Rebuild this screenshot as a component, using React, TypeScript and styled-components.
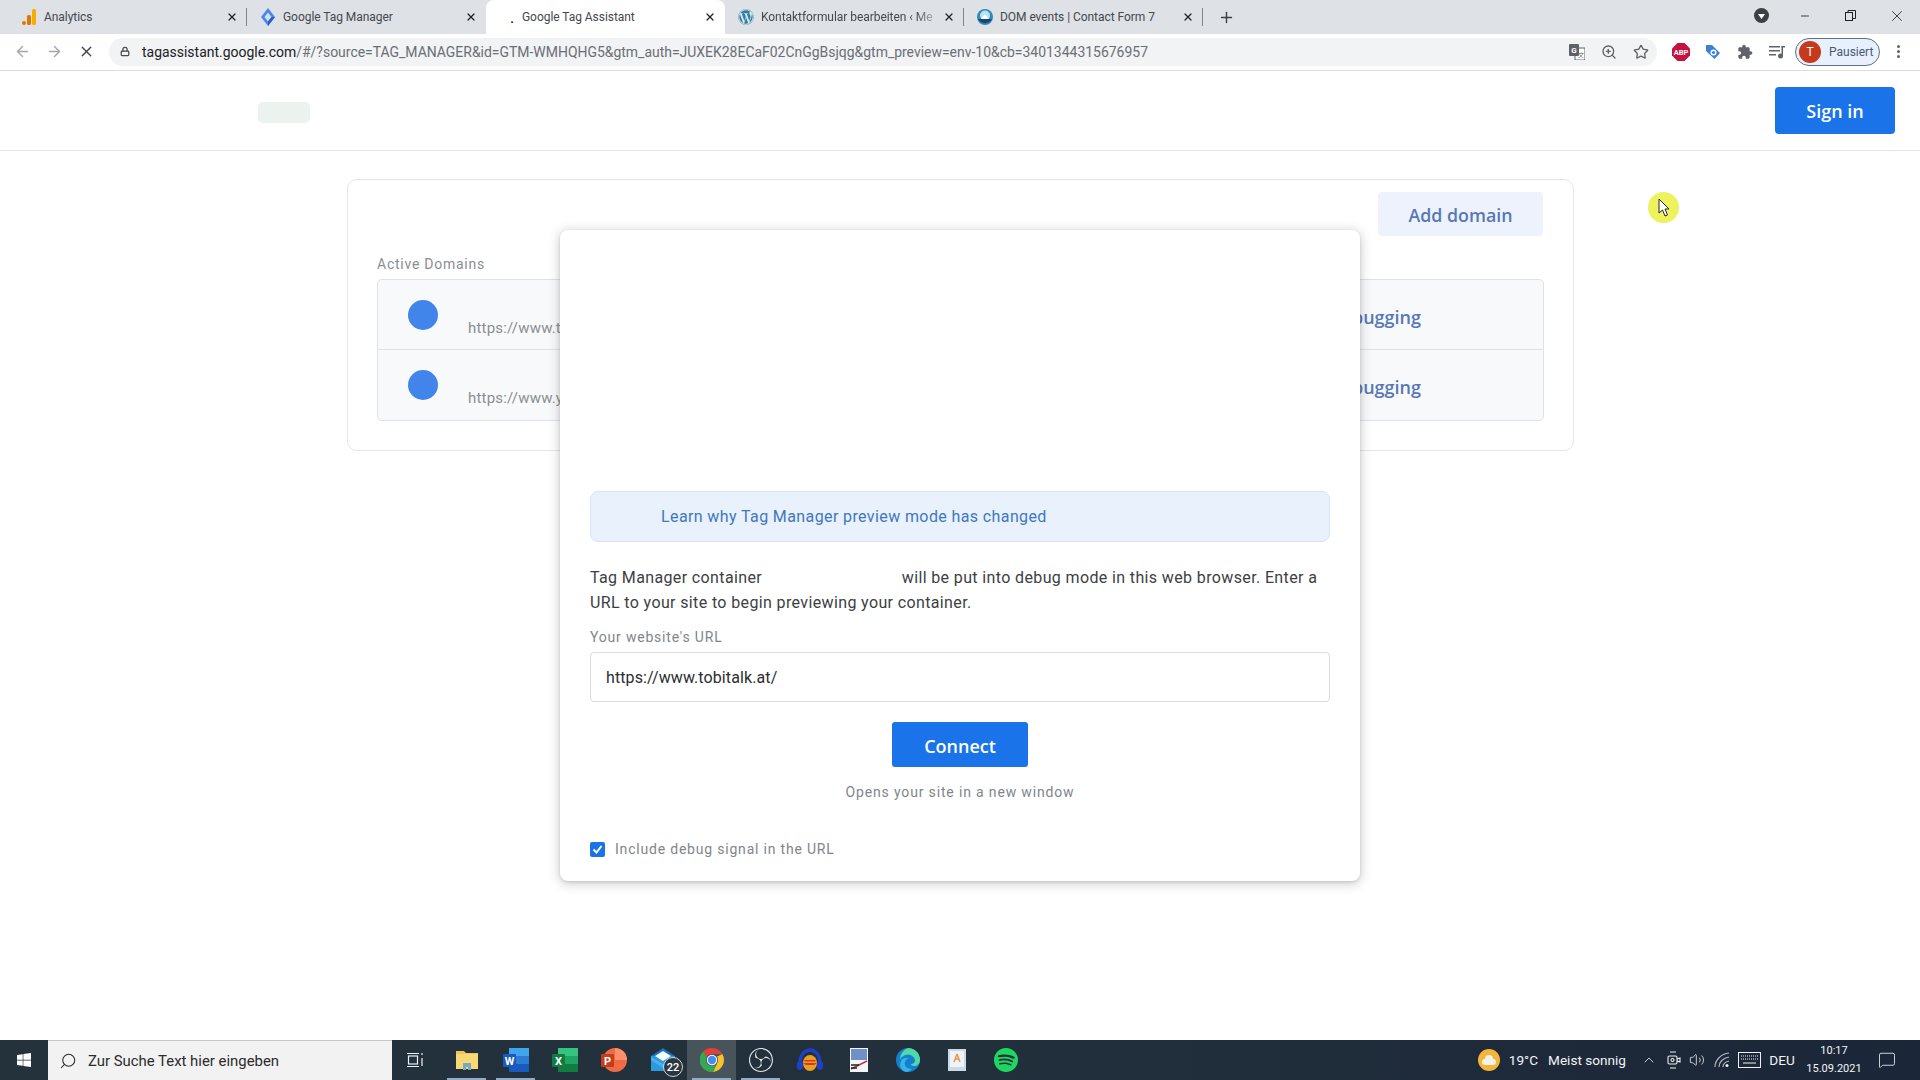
import React from "react";
import styled, { createGlobalStyle } from "styled-components";
import { ArrowLeft, ArrowRight, X, Lock, ZoomIn, Star, Plus, Minus, Search, ChevronUp, Volume2, MessageSquare } from "lucide-react";
import { FaWindows, FaWordpress } from "react-icons/fa";
import { SiObsstudio, SiSpotify } from "react-icons/si";

const Global = createGlobalStyle`
  html, body { margin: 0; padding: 0; background: #fff; }
  * { box-sizing: border-box; }
  body { font-family: Roboto, "Liberation Sans", sans-serif; }
`;

const Root = styled.div`
  position: relative;
  width: 1920px;
  height: 1080px;
  display: flex;
  flex-direction: column;
  overflow: hidden;
  background: #fff;
`;

/* ---------- browser chrome ---------- */
const TabStrip = styled.div`
  height: 34px;
  flex: none;
  display: flex;
  align-items: stretch;
  padding-left: 8px;
  background: #dee1e6;
`;
const Tab = styled.div<{ $active?: boolean; $sep?: boolean }>`
  position: relative;
  width: 239px;
  flex: none;
  display: flex;
  align-items: center;
  padding: 0 8px 0 13px;
  border-radius: 8px 8px 0 0;
  background: ${(p) => (p.$active ? "#fff" : "transparent")};
  &::after {
    content: "";
    display: ${(p) => (p.$sep ? "block" : "none")};
    position: absolute;
    right: 0;
    top: 8px;
    bottom: 8px;
    width: 1px;
    background: #80868b;
  }
`;
const Favicon = styled.span`
  width: 16px;
  height: 16px;
  flex: none;
  margin-right: 7px;
  display: flex;
  align-items: center;
  justify-content: center;
`;
const LoadingDot = styled.span`
  margin-left: 10px;
`;
const TabTitle = styled.span<{ $fade?: boolean }>`
  flex: 1;
  min-width: 0;
  overflow: hidden;
  white-space: nowrap;
  font-size: 12px;
  letter-spacing: -0.05px;
  color: #45484d;
  ${(p) => (p.$fade ? "-webkit-mask-image: linear-gradient(90deg,#000 85%,transparent 100%);" : "")}
`;
const TabClose = styled.span`
  width: 14px;
  flex: none;
  display: flex;
  justify-content: center;
  color: #202124;
`;
const NewTab = styled.span`
  width: 20px;
  margin-left: 13px;
  display: flex;
  align-items: center;
  justify-content: center;
  color: #3c4043;
`;
const WindowControls = styled.div`
  margin-left: auto;
  display: flex;
  align-items: center;
  color: #3c4043;
  padding: 0 1px 3px 0;
`;
const WinSlot = styled.span<{ $w: number }>`
  width: ${(p) => p.$w}px;
  display: flex;
  justify-content: center;
  align-items: center;
`;

const Toolbar = styled.div`
  height: 37px;
  flex: none;
  display: flex;
  align-items: center;
  padding: 0 0 1px 6px;
  background: #fff;
  border-bottom: 1px solid #dadce0;
`;
const ToolSlot = styled.span<{ $w?: number; $color?: string }>`
  width: ${(p) => p.$w ?? 32}px;
  flex: none;
  display: flex;
  align-items: center;
  justify-content: center;
  color: ${(p) => p.$color ?? "#5f6368"};
`;
const UrlBar = styled.div`
  width: 1548px;
  height: 28px;
  flex: none;
  margin: 0 8px 0 7px;
  padding: 0 0 0 11px;
  display: flex;
  align-items: center;
  border-radius: 14px;
  background: #f1f3f4;
`;
const UrlText = styled.div`
  flex: 1;
  min-width: 0;
  margin-left: 12px;
  overflow: hidden;
  white-space: nowrap;
  font-size: 13.96px;
  color: #6b6f74;
  b { font-weight: 400; color: #202124; }
`;
const ProfilePill = styled.div`
  width: 85px;
  height: 28px;
  flex: none;
  margin-left: 2px;
  display: flex;
  align-items: center;
  gap: 8px;
  padding-left: 3px;
  border: 1px solid #5f6f85;
  border-radius: 14px;
  background: #e8f0fe;
  font-size: 12px;
  color: #4a5a70;
`;
const Avatar = styled.span`
  width: 22px;
  height: 22px;
  border-radius: 50%;
  background: #c5391c;
  color: #fff;
  display: flex;
  align-items: center;
  justify-content: center;
  font-size: 12px;
`;
const MenuDots = styled.span`
  margin-left: 2px;
  width: 32px;
  display: flex;
  flex-direction: column;
  align-items: center;
  gap: 2px;
  i { width: 3px; height: 3px; border-radius: 50%; background: #5f6368; display: block; }
`;

/* ---------- page ---------- */
const Header = styled.header`
  height: 80px;
  flex: none;
  display: flex;
  align-items: center;
  justify-content: space-between;
  padding: 0 25px 0 258px;
  border-bottom: 1px solid #e3e5e8;
`;
const LogoBlob = styled.div`
  width: 52px;
  height: 21px;
  margin-top: 3px;
  border-radius: 5px;
  background: #ecf3ee;
`;
const SignIn = styled.button`
  width: 120px;
  height: 47px;
  border: 0;
  border-radius: 4px;
  background: #1a73e8;
  color: #fff;
  font-family: "Open Sans", sans-serif;
  font-size: 18px;
  font-weight: 600;
`;
const Main = styled.main`
  position: relative;
  flex: 1;
  min-height: 0;
  padding: 28px 0 0 347px;
`;
const DomainCard = styled.section`
  width: 1227px;
  height: 272px;
  padding: 12px 29px 0 29px;
  border: 1px solid #e4e6e9;
  border-radius: 10px;
`;
const CardTop = styled.div`
  display: flex;
  justify-content: flex-end;
  padding-right: 1px;
`;
const AddDomain = styled.button`
  width: 165px;
  height: 44px;
  padding: 2px 0 0;
  border: 0;
  border-radius: 4px;
  background: #edf2fc;
  color: #5877b5;
  font-family: "Open Sans", sans-serif;
  font-size: 17.8px;
  font-weight: 600;
`;
const SectionLabel = styled.div`
  margin-top: 18px;
  height: 20px;
  line-height: 20px;
  font-size: 14px;
  letter-spacing: 0.75px;
  color: #8a8e93;
`;
const DomainList = styled.div`
  margin-top: 5px;
  height: 142px;
  border: 1px solid #dfe1e4;
  border-radius: 5px;
  background: #f8f9fa;
`;
const DomainRow = styled.div<{ $last?: boolean }>`
  height: 70px;
  display: flex;
  align-items: flex-start;
  padding: 0 99px 0 30px;
  border-bottom: ${(p) => (p.$last ? "0" : "1px solid #e0e2e5")};
`;
const Dot = styled.span`
  width: 30px;
  height: 30px;
  margin-top: 20px;
  border-radius: 50%;
  background: #4285ea;
`;
const RowUrl = styled.span`
  margin: 38px 0 0 30px;
  line-height: 20px;
  font-size: 15px;
  letter-spacing: 0.2px;
  color: #8a8e93;
`;
const RowAction = styled.span`
  margin: 26px 23px 0 auto;
  line-height: 22px;
  font-family: "Open Sans", sans-serif;
  font-size: 18px;
  font-weight: 600;
  color: #5877b5;
`;
const Modal = styled.div`
  position: absolute;
  left: 560px;
  top: 79px;
  width: 800px;
  height: 651px;
  padding: 261px 30px 0;
  border-radius: 8px;
  background: #fff;
  box-shadow: 0 2px 12px rgba(60, 64, 67, 0.3), 0 1px 3px rgba(60, 64, 67, 0.15);
`;
const Banner = styled.div`
  height: 51px;
  display: flex;
  align-items: center;
  padding-left: 70px;
  border: 1px solid #d8e4f6;
  border-radius: 8px;
  background: #e9f1fd;
  font-size: 16px;
  letter-spacing: 0.39px;
  color: #3f78bd;
`;
const Paragraph = styled.p`
  margin: 23px 0 0;
  font-size: 16px;
  line-height: 25px;
  letter-spacing: 0.37px;
  color: #3c4043;
`;
const ParagraphLine = styled.span`
  display: block;
  white-space: nowrap;
`;
const Redacted = styled.span`
  display: inline-block;
  width: 131px;
`;
const FieldLabel = styled.div`
  margin-top: 12px;
  line-height: 20px;
  font-size: 14px;
  letter-spacing: 0.8px;
  color: #80868b;
`;
const UrlInput = styled.div`
  margin-top: 5px;
  height: 50px;
  display: flex;
  align-items: center;
  padding: 0 15px;
  border: 1px solid #dadce0;
  border-radius: 4px;
  font-size: 16px;
  letter-spacing: 0.1px;
  color: #2b2e31;
`;
const ConnectRow = styled.div`
  margin-top: 20px;
  display: flex;
  justify-content: center;
`;
const Connect = styled.button`
  width: 136px;
  height: 45px;
  padding: 2px 0 0;
  border: 0;
  border-radius: 3px;
  background: #1a73e8;
  color: #fff;
  font-family: "Open Sans", sans-serif;
  font-size: 18px;
  font-weight: 600;
`;
const Hint = styled.div`
  margin-top: 15px;
  text-align: center;
  line-height: 20px;
  font-size: 14px;
  letter-spacing: 0.84px;
  color: #80868b;
`;
const CheckRow = styled.div`
  margin-top: 37px;
  display: flex;
  align-items: center;
  gap: 10px;
  line-height: 20px;
  font-size: 14px;
  letter-spacing: 0.8px;
  color: #80868b;
`;
const CheckBox = styled.span`
  width: 15px;
  height: 15px;
  display: flex;
  align-items: center;
  justify-content: center;
  border-radius: 2px;
  background: #1a73e8;
`;

/* ---------- taskbar ---------- */
const Taskbar = styled.footer`
  height: 40px;
  flex: none;
  display: flex;
  align-items: stretch;
  background: linear-gradient(90deg, #24323c 0%, #22303c 50%, #1b2638 100%);
  color: #fff;
`;
const StartButton = styled.span`
  width: 48px;
  display: flex;
  align-items: center;
  justify-content: center;
`;
const SearchBox = styled.div`
  width: 344px;
  display: flex;
  align-items: center;
  gap: 11px;
  padding-left: 11px;
  background: #f2f2f2;
  border-top: 1px solid #c8c8c8;
  color: #2b2b2b;
  font-size: 14.9px;
`;
const SearchGlyph = styled(Search)`
  transform: scaleX(-1);
`;
const TaskView = styled.span`
  width: 50px;
  padding-right: 2px;
  display: flex;
  align-items: center;
  justify-content: center;
`;
const AppSlot = styled.span<{ $active?: boolean; $open?: boolean }>`
  position: relative;
  width: 49px;
  display: flex;
  align-items: center;
  justify-content: center;
  background: ${(p) => (p.$active ? "#47545c" : "transparent")};
  &::after {
    content: "";
    display: ${(p) => (p.$open ? "block" : "none")};
    position: absolute;
    left: 5px;
    right: 5px;
    bottom: 0;
    height: 2px;
    background: #93aec4;
  }
`;
const Badge = styled.span`
  position: absolute;
  right: 4px;
  bottom: 3px;
  width: 20px;
  height: 20px;
  display: flex;
  align-items: center;
  justify-content: center;
  border: 1px solid #d0d4d8;
  border-radius: 50%;
  background: #2a3640;
  font-size: 11px;
  font-weight: 500;
`;
const Tray = styled.div`
  margin-left: auto;
  display: flex;
  align-items: center;
  font-size: 13.6px;
  color: #f2f4f6;
`;
const TraySlot = styled.span<{ $w: number }>`
  width: ${(p) => p.$w}px;
  flex: none;
  display: flex;
  align-items: center;
  justify-content: center;
`;
const WeatherText = styled.span<{ $gap: number }>`
  margin-left: ${(p) => p.$gap}px;
  white-space: nowrap;
`;
const Clock = styled.span`
  width: 64px;
  display: flex;
  flex-direction: column;
  align-items: center;
  gap: 4px;
  font-size: 11px;
  line-height: 14px;
`;

/* ---------- cursor highlight ---------- */
const CursorHalo = styled.div`
  position: absolute;
  left: 1648px;
  top: 192px;
  width: 31px;
  height: 31px;
  display: flex;
  align-items: center;
  justify-content: center;
  border-radius: 50%;
  background: #eef25c;
`;

/* ---------- drawings ---------- */
const AnalyticsIcon = () => (
  <svg width="16" height="16" viewBox="0 0 16 16">
    <rect x="11" y="0" width="4" height="16" rx="1.5" fill="#f9ab00" />
    <rect x="6" y="6" width="4" height="10" rx="1.5" fill="#e37400" />
    <circle cx="3" cy="14" r="2" fill="#e37400" />
  </svg>
);
const GtmIcon = () => (
  <svg width="16" height="18" viewBox="0 0 16 18">
    <path d="M8 0l7 9-7 9-7-9z" fill="#4c86ea" />
    <path d="M8 4.5L11.5 9 8 13.5 4.5 9z" fill="#fff" opacity=".75" />
    <path d="M8 13.5l3.5-4.5L15 9l-7 9z" fill="#2a5fc4" />
  </svg>
);
const ContactIcon = () => (
  <svg width="16" height="16" viewBox="0 0 16 16">
    <circle cx="8" cy="8" r="8" fill="#2f88b8" />
    <circle cx="8" cy="6.5" r="5" fill="#b8e2ef" />
    <path d="M4 10l4-5 4 5z" fill="#fff" />
    <path d="M1 10h14a8 8 0 0 1-14 0z" fill="#1d4470" />
  </svg>
);
const TranslateIcon = () => (
  <svg width="16" height="16" viewBox="0 0 16 16">
    <rect x="6" y="4" width="10" height="12" fill="#fff" stroke="#5f6368" />
    <rect x="0" y="0" width="10" height="12" rx="1" fill="#5f6368" />
    <text x="5" y="9" textAnchor="middle" fontSize="8" fontWeight="700" fill="#fff" fontFamily="Roboto">G</text>
    <text x="12" y="13" textAnchor="middle" fontSize="6" fill="#5f6368" fontFamily="Noto Sans CJK SC">文</text>
  </svg>
);
const AbpIcon = () => (
  <svg width="18" height="18" viewBox="0 0 18 18">
    <path d="M5.5 0h7L18 5.5v7L12.500 18h-7L0 12.500v-7z" fill="#c7123f" />
    <text x="9" y="12" textAnchor="middle" fontSize="7.5" fontWeight="700" fill="#fff" fontFamily="Roboto">ABP</text>
  </svg>
);
const TagIcon = () => (
  <svg width="16" height="16" viewBox="0 0 16 16">
    <path d="M1 1h6l8 8-5.500 6L1 7z" fill="#3b82d6" />
    <circle cx="8.500" cy="8.500" r="3" fill="#fff" />
    <circle cx="8.500" cy="8.500" r="1.600" fill="#3b82d6" />
  </svg>
);
const PuzzleIcon = () => (
  <svg width="16" height="16" viewBox="0 0 24 24" fill="#5f6368">
    <path d="M20.500 11H19V7c0-1.100-.9-2-2-2h-4V3.500C13 2.120 11.880 1 10.500 1S8 2.120 8 3.500V5H4c-1.100 0-1.990.9-1.990 2v3.800H3.500c1.490 0 2.700 1.210 2.700 2.700s-1.210 2.700-2.700 2.700H2V20c0 1.100.9 2 2 2h3.800v-1.500c0-1.490 1.210-2.700 2.700-2.700 1.490 0 2.700 1.210 2.700 2.700V22H17c1.100 0 2-.9 2-2v-4h1.500c1.380 0 2.500-1.120 2.500-2.500S21.880 11 20.500 11z" />
  </svg>
);
const MediaIcon = () => (
  <svg width="16" height="14" viewBox="0 0 16 14" fill="#5f6368">
    <rect x="0" y="1" width="11" height="1.500" />
    <rect x="0" y="5" width="11" height="1.500" />
    <rect x="0" y="9" width="7" height="1.500" />
    <rect x="12.500" y="1" width="1.500" height="10" />
    <rect x="12.500" y="1" width="3.500" height="1.500" />
    <circle cx="11.500" cy="11" r="2.500" />
  </svg>
);
const DownloadDisc = () => (
  <svg width="15" height="15" viewBox="0 0 15 15">
    <circle cx="7.500" cy="7.500" r="7.500" fill="#3c4043" />
    <path d="M4 6h7l-3.500 5z" fill="#fff" />
  </svg>
);
const RestoreIcon = () => (
  <svg width="11" height="11" viewBox="0 0 11 11" fill="none" stroke="#202124" strokeWidth="1">
    <rect x=".5" y="2.500" width="7" height="8" />
    <path d="M3 2.500V.5h7.500v8H7.500" />
  </svg>
);
const TaskViewIcon = () => (
  <svg width="18" height="16" viewBox="0 0 18 16" fill="none" stroke="#eef1f3" strokeWidth="1.200">
    <path d="M0 1.500h12M0 14.500h12" />
    <rect x="1.500" y="4" width="9" height="8" />
    <path d="M15 1v2M15 6v8" />
  </svg>
);
const ExplorerIcon = () => (
  <svg width="24" height="24" viewBox="0 0 24 24">
    <path d="M1 3h8l2 2h12v16H1z" fill="#f3c558" />
    <rect x="1" y="6" width="22" height="15" fill="#f8d775" />
    <path d="M8 22v-7h8v7h-3v-3h-2v3z" fill="#7aa7c7" />
  </svg>
);
const OfficeIcon = ({ back, mid, front, letter }: { back: string; mid: string; front: string; letter: string }) => (
  <svg width="26" height="24" viewBox="0 0 26 24">
    <rect x="6" y="0" width="20" height="8" fill={back} />
    <rect x="6" y="8" width="20" height="8" fill={mid} />
    <rect x="6" y="16" width="20" height="8" fill={front} />
    <rect x="0" y="6" width="13" height="13" rx="1" fill={front} />
    <text x="6.500" y="16.500" textAnchor="middle" fontSize="11" fontWeight="700" fill="#fff" fontFamily="Roboto">{letter}</text>
  </svg>
);
const PptIcon = () => (
  <svg width="26" height="24" viewBox="0 0 26 24">
    <circle cx="14" cy="12" r="12" fill="#ed6c47" />
    <path d="M14 0a12 12 0 0 1 12 12H14z" fill="#ff8f6b" />
    <rect x="0" y="6" width="13" height="13" rx="1" fill="#c43e1c" />
    <text x="6.500" y="16.500" textAnchor="middle" fontSize="11" fontWeight="700" fill="#fff" fontFamily="Roboto">P</text>
  </svg>
);
const MailIcon = () => (
  <svg width="26" height="24" viewBox="0 0 26 24">
    <rect x="1" y="8" width="24" height="15" fill="#2b9be0" />
    <path d="M1 8l12-8 12 8z" fill="#1d6fb8" />
    <path d="M5 8l8-5 8 5-8 5z" fill="#f5fafd" />
    <path d="M1 9l12 7 12-7v3l-12 8-12-8z" fill="#49b2ee" />
  </svg>
);
const ChromeIcon = () => (
  <svg width="24" height="24" viewBox="0 0 24 24">
    <path d="M12 0a12 12 0 0 1 10.400 6H12a6 6 0 0 0-5.200 3L3 3.600A12 12 0 0 1 12 0z" fill="#e0413a" />
    <path d="M22.400 6A12 12 0 0 1 13 23.950L17.200 15A6 6 0 0 0 18 12a6 6 0 0 0-1-3.400z" fill="#f3c22d" />
    <path d="M13 23.950A12 12 0 0 1 3 3.600L6.800 9a6 6 0 0 0 5.200 9 6 6 0 0 0 5.200-3z" fill="#36a853" />
    <circle cx="12" cy="12" r="5.200" fill="#fff" />
    <circle cx="12" cy="12" r="4.200" fill="#4a8af4" />
  </svg>
);
const AudacityIcon = () => (
  <svg width="26" height="24" viewBox="0 0 26 24">
    <path d="M3 16C3 6 8 2 13 2s10 4 10 14" fill="none" stroke="#1f3fc4" strokeWidth="3.500" />
    <rect x="0" y="13" width="6" height="9" rx="3" fill="#1f3fc4" />
    <rect x="20" y="13" width="6" height="9" rx="3" fill="#1f3fc4" />
    <ellipse cx="13" cy="15" rx="7" ry="8" fill="#e8a020" />
    <path d="M6 15h14l-3 2H9z" fill="#d8361e" />
    <path d="M7 12h12l-1 1.500H8z" fill="#d8361e" />
  </svg>
);
const PaperIcon = () => (
  <svg width="18" height="24" viewBox="0 0 18 24">
    <rect width="18" height="24" fill="#f4f6f8" />
    <rect x="1" y="1" width="16" height="11" fill="#6f91c8" />
    <path d="M1 21L17 13" stroke="#b33a4a" strokeWidth="1.500" />
    <path d="M1 17h8M1 20h6" stroke="#222" strokeWidth="1.500" />
  </svg>
);
const EdgeIcon = () => (
  <svg width="24" height="24" viewBox="0 0 24 24">
    <circle cx="12" cy="12" r="12" fill="#1680d0" />
    <path d="M12 0a12 12 0 0 1 12 12c0 4-3 6-6 6-2 0-3-1-3-2 3 0 4-2 4-4-1-4-5-6-9-5a8 8 0 0 0-6 5A12 12 0 0 1 12 0z" fill="#4fd8a8" />
    <path d="M10 24C5 22 3 18 5 13c1-2 4-4 8-3-3 1-5 4-4 7 1 3 4 4 7 4-2 2-4 3-6 3z" fill="#36b4e8" />
  </svg>
);
const NotepadIcon = () => (
  <svg width="18" height="24" viewBox="0 0 18 24">
    <rect y="1" width="18" height="22" fill="#cbd8e6" />
    <rect x="2" y="3" width="14" height="16" fill="#eef3f8" />
    <path d="M9 6l-3 8M9 6l3 8M7 11h4" stroke="#e8964a" strokeWidth="1.500" fill="none" />
  </svg>
);
const WeatherIcon = () => (
  <svg width="22" height="22" viewBox="0 0 22 22">
    <circle cx="11" cy="11" r="11" fill="#f3b63a" />
    <path d="M7 16a3 3 0 0 1 0-6 4 4 0 0 1 8 0 3 3 0 0 1 0 6z" fill="#f4f1ea" />
  </svg>
);
const MeetIcon = () => (
  <svg width="14" height="18" viewBox="0 0 14 18" fill="none" stroke="#eef1f3" strokeWidth="1.100">
    <path d="M3 1h6M3 17h6" />
    <rect x="1" y="5" width="9" height="8" rx="1.500" />
    <path d="M10 8l3-1v4l-3-1" />
    <circle cx="5.500" cy="9" r="1.500" />
  </svg>
);
const WifiIcon = () => (
  <svg width="16" height="16" viewBox="0 0 16 16" fill="none" stroke="#aeb7bf" strokeWidth="1.200">
    <path d="M1 15C1 8 7 2 15 1M5 15c0-5 4-9 10-10M9 15c0-3 2-5 6-6" />
    <circle cx="13" cy="13.500" r="1.500" fill="#eef1f3" stroke="none" />
  </svg>
);
const KeyboardIcon = () => (
  <svg width="23" height="16" viewBox="0 0 23 16" fill="none" stroke="#eef1f3" strokeWidth="1">
    <rect x=".5" y=".5" width="22" height="15" />
    <path d="M3 4h17M3 7h17" strokeDasharray="1 1" />
    <path d="M5 11h13" />
  </svg>
);
const MouseArrow = () => (
  <svg width="12" height="19" viewBox="0 0 12 19">
    <path d="M1 1v14l3.500-3 2.500 6 2.500-1-2.500-6H11z" fill="#fff" stroke="#222" strokeWidth="1" />
  </svg>
);

const TABS = [
  { icon: <AnalyticsIcon />, title: "Analytics", sep: true },
  { icon: <GtmIcon />, title: "Google Tag Manager" },
  { icon: <LoadingDot>.</LoadingDot>, title: "Google Tag Assistant", active: true },
  { icon: <FaWordpress size={16} color="#2a7fa5" />, title: "Kontaktformular bearbeiten ‹ Me", fade: true, sep: true },
  { icon: <ContactIcon />, title: "DOM events | Contact Form 7", sep: true },
];

const APPS: { icon: React.ReactNode; open?: boolean; active?: boolean; badge?: string }[] = [
  { icon: <ExplorerIcon />, open: true },
  { icon: <OfficeIcon back="#41a5ee" mid="#2b7cd3" front="#185abd" letter="W" />, open: true },
  { icon: <OfficeIcon back="#33c481" mid="#21a366" front="#107c41" letter="X" /> },
  { icon: <PptIcon /> },
  { icon: <MailIcon />, badge: "22" },
  { icon: <ChromeIcon />, open: true, active: true },
  { icon: <SiObsstudio size={24} color="#e8e8e8" />, open: true },
  { icon: <AudacityIcon /> },
  { icon: <PaperIcon /> },
  { icon: <EdgeIcon /> },
  { icon: <NotepadIcon /> },
  { icon: <SiSpotify size={24} color="#1ed760" /> },
];

export default function App() {
  return (
    <Root>
      <Global />
      <TabStrip>
        {TABS.map((t) => (
          <Tab key={t.title} $active={t.active} $sep={t.sep}>
            <Favicon>{t.icon}</Favicon>
            <TabTitle $fade={t.fade}>{t.title}</TabTitle>
            <TabClose><X size={12} strokeWidth={2.5} /></TabClose>
          </Tab>
        ))}
        <NewTab><Plus size={17} strokeWidth={2} /></NewTab>
        <WindowControls>
          <WinSlot $w={46}><DownloadDisc /></WinSlot>
          <WinSlot $w={42}><Minus size={12} /></WinSlot>
          <WinSlot $w={48}><RestoreIcon /></WinSlot>
          <WinSlot $w={45}><X size={18} strokeWidth={1.3} /></WinSlot>
        </WindowControls>
      </TabStrip>

      <Toolbar>
        <ToolSlot $color="#a3a7ac"><ArrowLeft size={17} /></ToolSlot>
        <ToolSlot $color="#a3a7ac"><ArrowRight size={17} /></ToolSlot>
        <ToolSlot $color="#45484d"><X size={17} /></ToolSlot>
        <UrlBar>
          <ToolSlot $w={10} $color="#45484d"><Lock size={11} strokeWidth={3} /></ToolSlot>
          <UrlText>
            <b>tagassistant.google.com</b>/#/?source=TAG_MANAGER&amp;id=GTM-WMHQHG5&amp;gtm_auth=JUXEK28ECaF02CnGgBsjqg&amp;gtm_preview=env-10&amp;cb=3401344315676957
          </UrlText>
          <ToolSlot><TranslateIcon /></ToolSlot>
          <ToolSlot><ZoomIn size={16} /></ToolSlot>
          <ToolSlot><Star size={16} /></ToolSlot>
        </UrlBar>
        <ToolSlot><AbpIcon /></ToolSlot>
        <ToolSlot><TagIcon /></ToolSlot>
        <ToolSlot><PuzzleIcon /></ToolSlot>
        <ToolSlot><MediaIcon /></ToolSlot>
        <ProfilePill><Avatar>T</Avatar>Pausiert</ProfilePill>
        <MenuDots><i /><i /><i /></MenuDots>
      </Toolbar>

      <Header>
        <LogoBlob />
        <SignIn>Sign in</SignIn>
      </Header>

      <Main>
        <DomainCard>
          <CardTop><AddDomain>Add domain</AddDomain></CardTop>
          <SectionLabel>Active Domains</SectionLabel>
          <DomainList>
            <DomainRow>
              <Dot />
              <RowUrl>https://www.tobitalk.at/</RowUrl>
              <RowAction>Debugging</RowAction>
            </DomainRow>
            <DomainRow $last>
              <Dot />
              <RowUrl>https://www.y</RowUrl>
              <RowAction>Debugging</RowAction>
            </DomainRow>
          </DomainList>
        </DomainCard>

        <Modal>
          <Banner>Learn why Tag Manager preview mode has changed</Banner>
          <Paragraph>
            <ParagraphLine>Tag Manager container <Redacted /> <span>will be put into debug mode in this web browser. Enter a</span></ParagraphLine>
            <ParagraphLine>URL to your site to begin previewing your container.</ParagraphLine>
          </Paragraph>
          <FieldLabel>Your website's URL</FieldLabel>
          <UrlInput>https://www.tobitalk.at/</UrlInput>
          <ConnectRow><Connect>Connect</Connect></ConnectRow>
          <Hint>Opens your site in a new window</Hint>
          <CheckRow>
            <CheckBox>
              <svg width="11" height="11" viewBox="0 0 11 11" fill="none" stroke="#fff" strokeWidth="2"><path d="M1.500 5.500l3 3 5-6.500" /></svg>
            </CheckBox>
            Include debug signal in the URL
          </CheckRow>
        </Modal>
      </Main>

      <Taskbar>
        <StartButton><FaWindows size={16} color="#fff" /></StartButton>
        <SearchBox>
          <SearchGlyph size={18} strokeWidth={1.4} />
          Zur Suche Text hier eingeben
        </SearchBox>
        <TaskView><TaskViewIcon /></TaskView>
        {APPS.map((a, i) => (
          <AppSlot key={i} $open={a.open} $active={a.active}>
            {a.icon}
            {a.badge && <Badge>{a.badge}</Badge>}
          </AppSlot>
        ))}
        <Tray>
          <TraySlot $w={24}><WeatherIcon /></TraySlot>
          <WeatherText $gap={8}>19°C</WeatherText>
          <WeatherText $gap={10}>Meist sonnig</WeatherText>
          <TraySlot $w={11} />
          <TraySlot $w={24}><ChevronUp size={16} strokeWidth={1.2} /></TraySlot>
          <TraySlot $w={25}><MeetIcon /></TraySlot>
          <TraySlot $w={22}><Volume2 size={16} strokeWidth={1.2} /></TraySlot>
          <TraySlot $w={28}><WifiIcon /></TraySlot>
          <TraySlot $w={26}><KeyboardIcon /></TraySlot>
          <TraySlot $w={40}>DEU</TraySlot>
          <Clock><span>10:17</span><span>15.09.2021</span></Clock>
          <TraySlot $w={42}><MessageSquare size={18} strokeWidth={1.1} /></TraySlot>
          <TraySlot $w={12} />
        </Tray>
      </Taskbar>

      <CursorHalo><MouseArrow /></CursorHalo>
    </Root>
  );
}
